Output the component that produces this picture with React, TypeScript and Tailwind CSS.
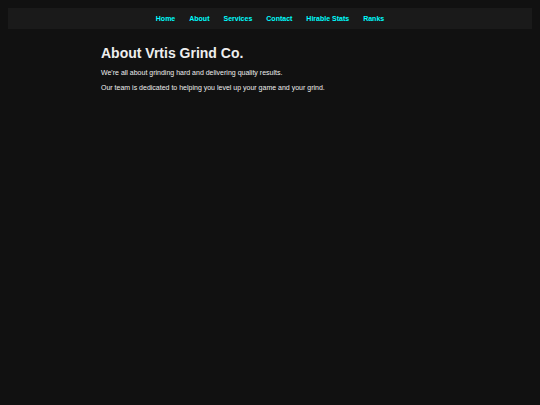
const links = ["Home", "About", "Services", "Contact", "Hirable Stats", "Ranks"];

export default function App() {
  return (
    <div className="min-h-screen bg-[#111111] p-2 font-['Liberation_Sans',Arial,sans-serif] text-[#eeeeee]">
      <nav className="flex justify-center gap-[14px] bg-[#1a1a1a] py-1">
        {links.map((label) => (
          <a key={label} href="#" className="text-[7px] leading-[13px] font-bold text-[#00ffff]">
            {label}
          </a>
        ))}
      </nav>
      <main className="mx-auto flex max-w-[338px] flex-col gap-[7px] pt-[15px]">
        <h1 className="text-[14px] leading-[18px] font-bold">About Vrtis Grind Co.</h1>
        <p className="text-[7px] leading-2">
          We're all about grinding hard and delivering quality results.
        </p>
        <p className="text-[7px] leading-2">
          Our team is dedicated to helping you level up your game and your grind.
        </p>
      </main>
    </div>
  );
}
